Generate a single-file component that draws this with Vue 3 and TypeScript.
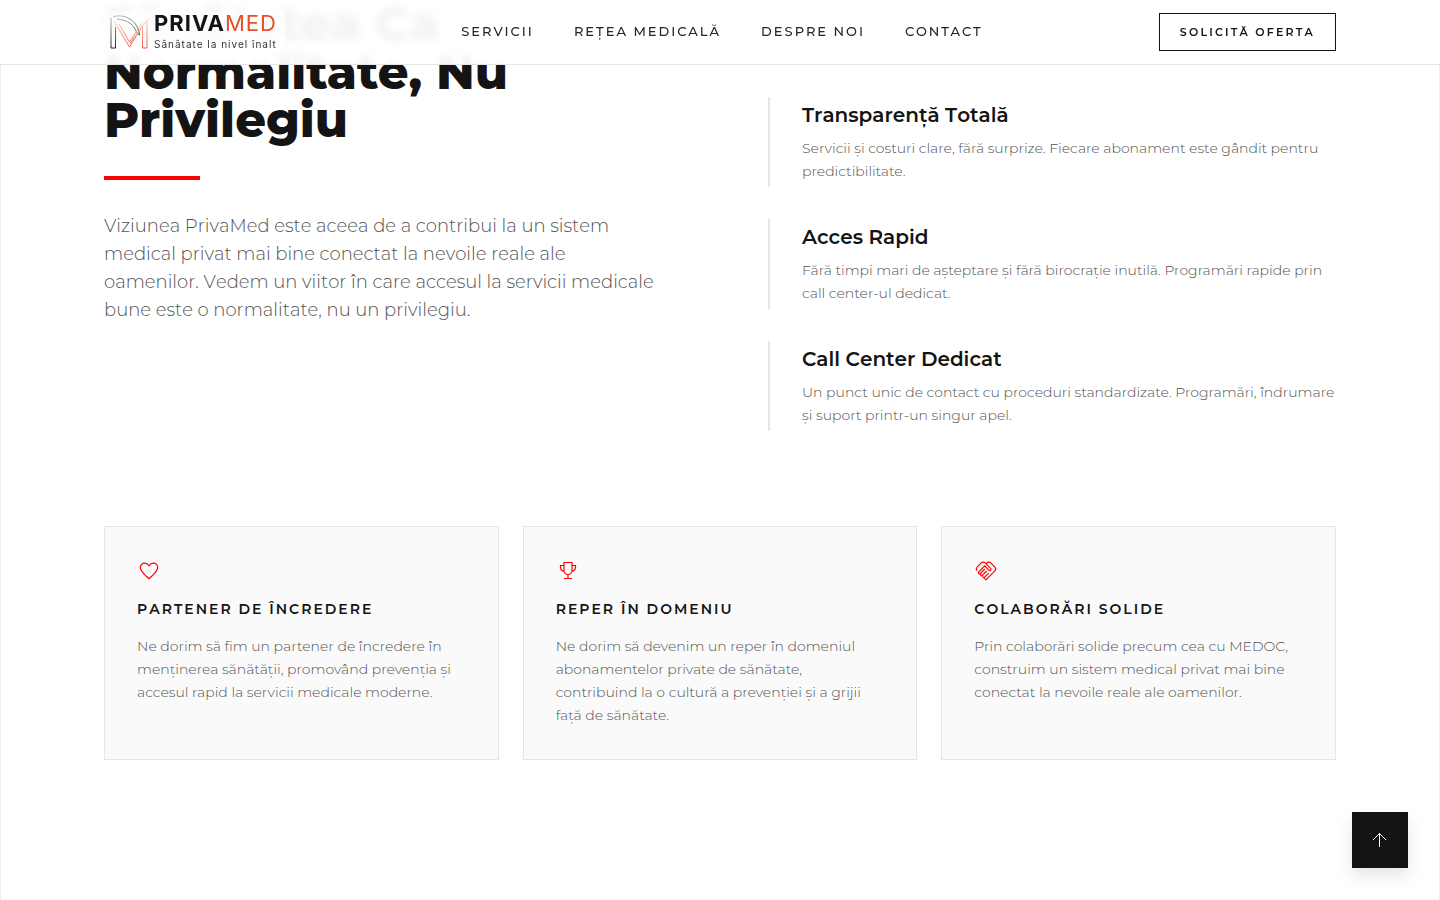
<script setup lang="ts">
interface Entry {
  title: string
  text: string
}

interface Card extends Entry {
  icon: string[]
}

const links: string[] = ['Servicii', 'Rețea medicală', 'Despre noi', 'Contact']

const benefits: Entry[] = [
  {
    title: 'Transparență Totală',
    text: 'Servicii și costuri clare, fără surprize. Fiecare abonament este gândit pentru predictibilitate.',
  },
  {
    title: 'Acces Rapid',
    text: 'Fără timpi mari de așteptare și fără birocrație inutilă. Programări rapide prin call center-ul dedicat.',
  },
  {
    title: 'Call Center Dedicat',
    text: 'Un punct unic de contact cu proceduri standardizate. Programări, îndrumare și suport printr-un singur apel.',
  },
]

const cards: Card[] = [
  {
    title: 'Partener de încredere',
    text: 'Ne dorim să fim un partener de încredere în menținerea sănătății, promovând prevenția și accesul rapid la servicii medicale moderne.',
    icon: [
      'M12 19.8L9.500 17.500C5.500 13.800 3.300 11.800 3.300 8.600C3.300 6 5.200 4.200 7.600 4.200C9.400 4.200 11 5.200 12 6.800C13 5.200 14.600 4.200 16.400 4.200C18.800 4.200 20.700 6 20.700 8.600C20.700 11.800 18.500 13.800 14.500 17.500Z',
    ],
  },
  {
    title: 'Reper în domeniu',
    text: 'Ne dorim să devenim un reper în domeniul abonamentelor private de sănătate, contribuind la o cultură a prevenției și a grijii față de sănătate.',
    icon: [
      'M8 3.500H16V11.500A4 4 0 0 1 8 11.500Z',
      'M8 6.500H4.500V8.500A3.500 3.500 0 0 0 8 12',
      'M16 6.500H19.500V8.500A3.500 3.500 0 0 1 16 12',
      'M12 15.500V19.500M8 19.500H16',
    ],
  },
  {
    title: 'Colaborări solide',
    text: 'Prin colaborări solide precum cea cu MEDOC, construim un sistem medical privat mai bine conectat la nevoile reale ale oamenilor.',
    icon: [
      'M2.900 11.600C2.100 10.200 2.300 8.900 3.300 7.900L7 4.200C8.300 2.900 10.100 2.900 11.400 4.200L16.600 9.400C17.100 9.900 17.100 10.600 16.600 11.100S15.400 11.600 14.900 11.100L10.700 6.900L4.700 12.900C4.200 13.400 4.200 14 4.700 14.500S5.800 15 6.300 14.500L10.800 10',
      'M6.900 14.300C6.300 14.900 6.300 15.700 6.800 16.200S8 16.700 8.500 16.200L12.700 12',
      'M8.900 16.400C8.400 17 8.400 17.700 8.900 18.200S10.100 18.700 10.600 18.200L14.700 14.100',
      'M11 18.500C10.500 19 10.500 19.700 11 20.200S12.200 20.700 12.700 20.200L20.700 12.200C22 10.900 22 9.200 20.700 7.900L17 4.200C15.700 2.900 14 2.900 12.700 4.200L12 4.900',
    ],
  },
]

function toTop(): void {
  window.scrollTo({ top: 0, behavior: 'smooth' })
}
</script>

<template>
  <div class="page">
    <header class="header">
      <div class="container bar">
        <a class="logo" href="#" aria-label="PrivaMed">
          <svg class="mark" viewBox="0 0 38 34" fill="none" aria-hidden="true">
            <defs>
              <linearGradient id="ink" x1="0" y1="1" x2="0" y2="0">
                <stop offset="0" stop-color="#222" />
                <stop offset="1" stop-color="#b4b8bc" />
              </linearGradient>
              <linearGradient id="arc" x1="0" y1="0" x2="1" y2="1">
                <stop offset="0" stop-color="#c4c7ca" />
                <stop offset="1" stop-color="#44484c" />
              </linearGradient>
              <linearGradient id="fire" x1="0" y1="1" x2="0" y2="0">
                <stop offset="0" stop-color="#ec5a35" />
                <stop offset="1" stop-color="#f8d3c8" />
              </linearGradient>
            </defs>
            <path d="M1 3V33H5.500V12" stroke="url(#ink)" />
            <path d="M3 2C14-2 28 5 29.500 20C24 17 26 6 7 4" stroke="url(#arc)" />
            <path d="M4 6L19.500 32L32.500 11V33H37V5L19.500 29M9 9L19.500 27L32 8" stroke="url(#fire)" />
          </svg>
          <span class="words">
            <span class="brand">PRIVA<span class="brand-end">MED</span></span>
            <span class="tagline">Sănătate la nivel înalt</span>
          </span>
        </a>
        <nav class="nav">
          <a v-for="link in links" :key="link" href="#">{{ link }}</a>
        </nav>
        <button class="offer" type="button">Solicită oferta</button>
      </div>
    </header>

    <main class="section">
      <div class="container">
        <div class="vision">
          <div class="intro">
            <h2>Sănătatea Ca Normalitate, Nu Privilegiu</h2>
            <div class="rule"></div>
            <p>
              Viziunea PrivaMed este aceea de a contribui la un sistem medical privat mai bine
              conectat la nevoile reale ale oamenilor. Vedem un viitor în care accesul la servicii
              medicale bune este o normalitate, nu un privilegiu.
            </p>
          </div>
          <div class="benefits">
            <div class="lead-line"></div>
            <article v-for="item in benefits" :key="item.title" class="benefit">
              <h3>{{ item.title }}</h3>
              <p>{{ item.text }}</p>
            </article>
          </div>
        </div>
        <div class="cards">
          <article v-for="card in cards" :key="card.title" class="card">
            <svg class="icon" viewBox="0 0 24 24" aria-hidden="true">
              <path v-for="d in card.icon" :key="d" :d="d" />
            </svg>
            <h3>{{ card.title }}</h3>
            <p>{{ card.text }}</p>
          </article>
        </div>
      </div>
    </main>

    <button class="to-top" type="button" aria-label="Înapoi sus" @click="toTop">
      <svg viewBox="0 0 24 24" aria-hidden="true">
        <path d="M11.500 19V5.500M5 12L11.500 5.500L18 12" />
      </svg>
    </button>
  </div>
</template>

<style>
body {
  margin: 0;
  background: #fff;
}
</style>

<style scoped>
.page {
  box-sizing: border-box;
  height: 100vh;
  overflow: hidden;
  border: solid #eee;
  border-width: 0 1px;
  background: #fff;
  color: #141414;
  font-family: Montserrat, Inter, "Noto Sans", sans-serif;
}

h2,
h3,
p {
  margin: 0;
}

h3,
.intro p {
  font-kerning: none;
}

a {
  color: inherit;
  text-decoration: none;
}

.container {
  box-sizing: border-box;
  width: 100%;
  max-width: 1280px;
  margin: 0 auto;
  padding: 0 24px;
}

.header {
  position: fixed;
  z-index: 2;
  top: 0;
  left: 0;
  right: 0;
  border-bottom: 1px solid #e5e5e5;
  background: rgba(255, 255, 255, 0.95);
  backdrop-filter: blur(4px);
}

.bar {
  display: flex;
  align-items: center;
  justify-content: space-between;
  height: 64px;
}

.logo {
  display: flex;
  align-items: center;
  gap: 6px;
  padding: 0 8px 0 6px;
  background: rgba(255, 255, 255, 0.6);
}

.mark {
  width: 38px;
  height: 34px;
}

.words {
  display: flex;
  flex-direction: column;
  font-family: Inter, sans-serif;
}

.brand {
  font-size: 22px;
  line-height: 24px;
  font-weight: 700;
  letter-spacing: 1px;
}

.brand-end {
  color: #e84f28;
  font-weight: 400;
}

.tagline {
  font-size: 10px;
  line-height: 18px;
  letter-spacing: 1px;
  color: #333;
}

.nav {
  display: flex;
  gap: 40px;
  padding-bottom: 2px;
  font-size: 13px;
  line-height: 20px;
  font-weight: 500;
  letter-spacing: 2px;
  text-transform: uppercase;
  color: #262626;
}

.offer {
  height: 38px;
  padding: 0 20px;
  border: 1px solid #141414;
  background: transparent;
  color: #141414;
  font: 600 11px/16px Montserrat, Inter, sans-serif;
  letter-spacing: 0.2em;
  font-kerning: none;
  text-transform: uppercase;
}

.section {
  margin-top: -25px;
}

.vision {
  display: grid;
  grid-template-columns: 1fr 1fr;
  gap: 96px;
}

.intro {
  padding-top: 25px;
}

.intro h2 {
  max-width: 480px;
  font-size: 48px;
  line-height: 48px;
  font-weight: 800;
}

.rule {
  width: 96px;
  height: 4px;
  margin: 32px 0;
  background: #f00;
}

.intro p {
  max-width: 552px;
  font-size: 18px;
  line-height: 28px;
  font-weight: 300;
  color: #525252;
}

.benefits {
  display: flex;
  flex-direction: column;
  gap: 32px;
}

.lead-line {
  height: 90px;
  border-left: 2px solid #e5e5e5;
}

.benefit {
  padding: 4px 0 4px 32px;
  border-left: 2px solid #e5e5e5;
}

.benefit h3 {
  margin-bottom: 8px;
  font-size: 20px;
  line-height: 28px;
  font-weight: 600;
}

.benefit p,
.card p {
  font-size: 14px;
  line-height: 23px;
  font-weight: 300;
  color: #525252;
}

.cards {
  display: grid;
  grid-template-columns: repeat(3, 1fr);
  gap: 24px;
  margin-top: 95px;
}

.card {
  padding: 32px;
  border: 1px solid #e5e5e5;
  background: #fafafa;
}

.icon {
  display: block;
  width: 24px;
  height: 24px;
  margin-bottom: 16px;
  fill: none;
  stroke: #f00;
  stroke-width: 1.2;
}

.card h3 {
  margin-bottom: 16px;
  font-size: 14px;
  line-height: 20px;
  font-weight: 600;
  letter-spacing: 2px;
  text-transform: uppercase;
}

.to-top {
  position: fixed;
  right: 32px;
  bottom: 32px;
  display: grid;
  place-items: center;
  width: 56px;
  height: 56px;
  padding: 0;
  border: 0;
  background: #141414;
  box-shadow: 0 8px 16px rgba(0, 0, 0, 0.1);
}

.to-top svg {
  width: 24px;
  height: 24px;
  fill: none;
  stroke: #fff;
}
</style>
